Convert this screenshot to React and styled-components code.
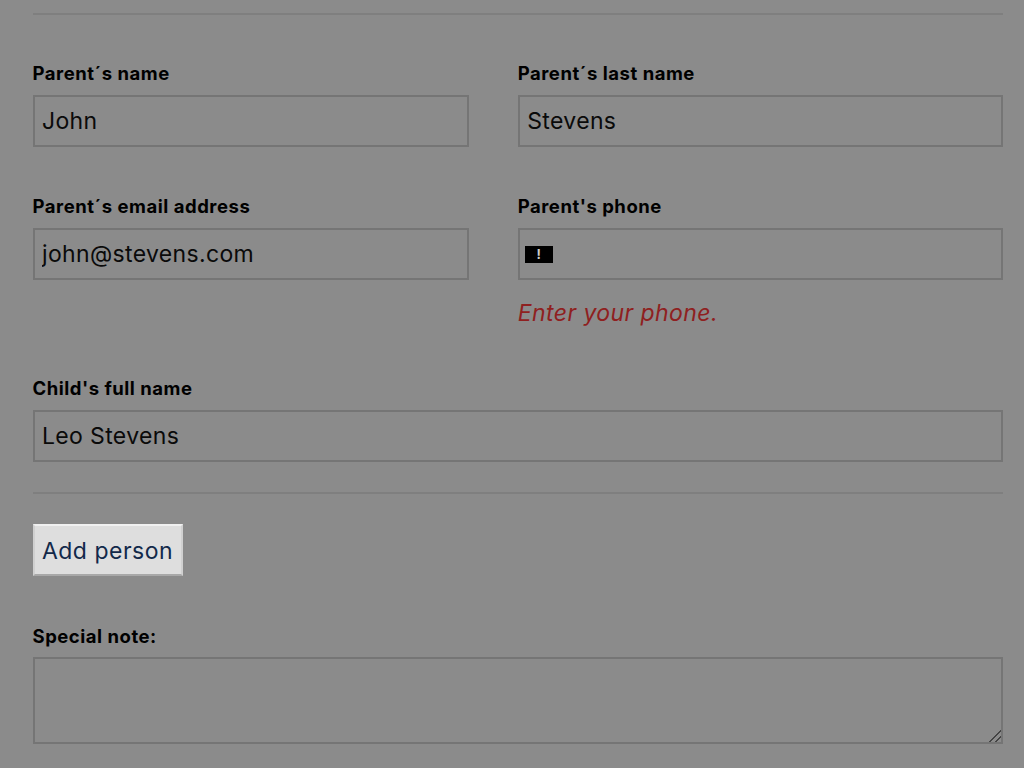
import React from 'react'
import styled, { createGlobalStyle } from 'styled-components'

const GlobalStyle = createGlobalStyle`
  html, body {
    margin: 0;
    padding: 0;
    height: 100%;
    overflow: hidden;
    background: #8b8b8b;
  }
  * {
    box-sizing: border-box;
  }
`

const Page = styled.form`
  height: 768px;
  padding: 13px 21px 0 32.5px;
  font-family: Inter, 'Noto Sans', 'Liberation Sans', sans-serif;
  background: #8b8b8b;
  color: #000;
`

const Divider = styled.div`
  height: 2px;
  background: #7f7f7f;
`

const Row = styled.div`
  display: grid;
  grid-template-columns: 45% 50%;
  column-gap: 5%;
  margin-top: ${({ $top }) => $top}px;
`

const Field = styled.div`
  margin-top: ${({ $top }) => $top || 0}px;
`

const Label = styled.label`
  display: block;
  height: 22px;
  margin-bottom: ${({ $gap }) => $gap || 11}px;
  font-size: 18.5px;
  line-height: 22px;
  font-weight: 700;
  letter-spacing: 0.52px;
`

const InputWrap = styled.div`
  position: relative;
`

const TextInput = styled.input`
  display: block;
  width: 100%;
  height: 52px;
  padding: 0 7.5px;
  background: transparent;
  border: 2px solid #757575;
  border-radius: 0;
  outline: none;
  color: #0a0a0a;
  font-family: inherit;
  font-size: 23px;
  letter-spacing: 0.35px;
`

const WarnBadge = styled.span`
  position: absolute;
  left: 7px;
  top: 18px;
  width: 28px;
  height: 17px;
  display: flex;
  align-items: center;
  justify-content: center;
  background: #000;
  color: #ccc;
  font-size: 13px;
  font-weight: 700;
  line-height: 1;
`

const ErrorText = styled.div`
  margin-top: 18px;
  height: 31px;
  font-size: 23px;
  line-height: 30px;
  font-style: italic;
  color: #8f2020;
  letter-spacing: 0.42px;
`

const AddButton = styled.button`
  display: block;
  width: 150px;
  height: 52px;
  margin-top: 30px;
  padding: 1px 0 0;
  background: #dedede;
  border: 2px solid;
  border-color: #f0f0f0 #d0d0d0 #a8a8a8 #d0d0d0;
  color: #12294a;
  font-family: inherit;
  font-size: 23px;
  letter-spacing: 0.5px;
`

const NoteInput = styled.textarea`
  display: block;
  width: 100%;
  height: 87px;
  padding: 8px;
  background: transparent;
  border: 2px solid #757575;
  border-radius: 0;
  outline: none;
  font-family: inherit;
  font-size: 23px;

  &::-webkit-resizer {
    background: linear-gradient(
      135deg,
      transparent 59%,
      #444 59%,
      #444 65%,
      transparent 65%,
      transparent 79%,
      #444 79%,
      #444 85%,
      transparent 85%
    );
  }
`

const App = () => {
  return (
    <Page onSubmit={(e) => e.preventDefault()}>
      <GlobalStyle />
      <Divider />
      <Row $top={47}>
        <Field>
          <Label>Parent´s name</Label>
          <TextInput defaultValue='John' />
        </Field>
        <Field>
          <Label>Parent´s last name</Label>
          <TextInput defaultValue='Stevens' />
        </Field>
      </Row>
      <Row $top={48}>
        <Field>
          <Label>Parent´s email address</Label>
          <TextInput defaultValue='john@stevens.com' />
        </Field>
        <Field>
          <Label>Parent's phone</Label>
          <InputWrap>
            <TextInput />
            <WarnBadge>!</WarnBadge>
          </InputWrap>
          <ErrorText>Enter your phone.</ErrorText>
        </Field>
      </Row>
      <Field $top={48}>
        <Label>Child's full name</Label>
        <TextInput defaultValue='Leo Stevens' />
      </Field>
      <Field $top={30}>
        <Divider />
      </Field>
      <AddButton type='button'>Add person</AddButton>
      <Field $top={49}>
        <Label $gap={10}>Special note:</Label>
        <NoteInput />
      </Field>
    </Page>
  )
}

export default App
